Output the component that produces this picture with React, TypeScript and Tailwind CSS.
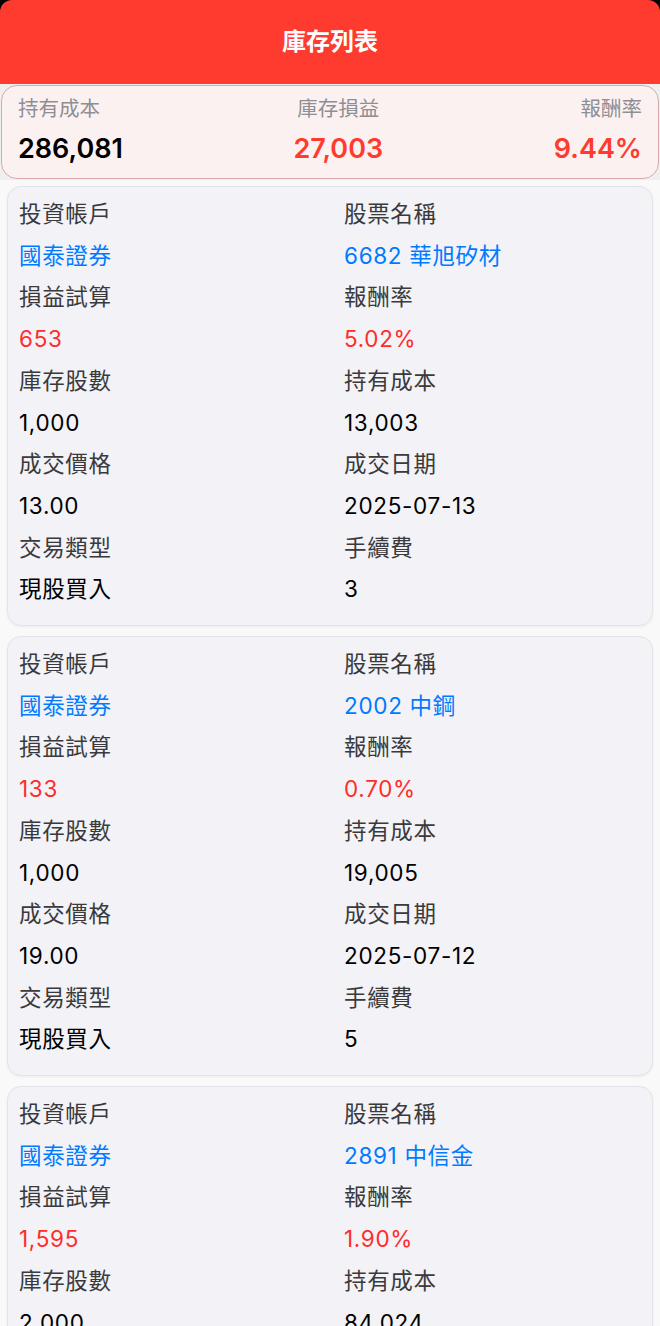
import React from 'react';

interface Holding {
    account: string;
    stock: string;
    pnl: string;
    rate: string;
    shares: string;
    cost: string;
    price: string;
    date: string;
    type: string;
    fee: string;
}

const holdings: Holding[] = [
    { account: '國泰證券', stock: '6682 華旭矽材', pnl: '653', rate: '5.02%', shares: '1,000', cost: '13,003', price: '13.00', date: '2025-07-13', type: '現股買入', fee: '3' },
    { account: '國泰證券', stock: '2002 中鋼', pnl: '133', rate: '0.70%', shares: '1,000', cost: '19,005', price: '19.00', date: '2025-07-12', type: '現股買入', fee: '5' },
    { account: '國泰證券', stock: '2891 中信金', pnl: '1,595', rate: '1.90%', shares: '2,000', cost: '84,024', price: '42.00', date: '2025-07-11', type: '現股買入', fee: '24' },
];

const font = { fontFamily: 'Inter, "Noto Sans CJK TC", sans-serif' };

const HoldingCard: React.FC<{ h: Holding }> = ({ h }) => {
    const rows: [string, string, string][] = [
        ['投資帳戶', '股票名稱', ''],
        [h.account, h.stock, 'blue'],
        ['損益試算', '報酬率', ''],
        [h.pnl, h.rate, 'red'],
        ['庫存股數', '持有成本', ''],
        [h.shares, h.cost, 'plain'],
        ['成交價格', '成交日期', ''],
        [h.price, h.date, 'plain'],
        ['交易類型', '手續費', ''],
        [h.type, h.fee, 'plain'],
    ];

    const colorFor = (kind: string) =>
        kind === 'blue' ? 'text-[#007aff]' : kind === 'red' ? 'text-[#ff2d2a]' : kind === 'plain' ? 'text-black' : 'text-[#3a3a3c]';

    return (
        <div className="mx-[7px] rounded-[14px] border border-[#e3e3e8] bg-[#f2f2f7] px-[11px] pt-[6px] pb-[15px] shadow-[0_1px_3px_rgba(0,0,0,0.05)]">
            <div className="grid grid-cols-2 gap-x-[28px] text-[22.5px] leading-[41.7px] tracking-[0.03em]">
                {rows.map(([left, right, kind], i) => (
                    <React.Fragment key={i}>
                        <span className={`whitespace-nowrap ${colorFor(kind)}`}>{left}</span>
                        <span className={`whitespace-nowrap ${colorFor(kind)}`}>{right}</span>
                    </React.Fragment>
                ))}
            </div>
        </div>
    );
};

const App: React.FC = () => {
    return (
        <div className="h-[1326px] w-[660px] overflow-hidden bg-black" style={font}>
            <div className="flex h-[84px] items-center justify-center rounded-t-[12px] bg-[#ff3b30]">
                <h1 className="text-[24px] font-bold text-white">庫存列表</h1>
            </div>

            <div className="h-full bg-[#f9f9f9]">
                <div className="bg-[#efefef] p-px">
                    <div className="flex h-[94px] items-stretch justify-between rounded-[16px] border border-[#dba9a9] bg-[#fcf1f1] px-[16px]">
                        <div className="flex flex-col pt-[9px]">
                            <span className="text-[20.5px] leading-[28px] text-[#8e8e93]">持有成本</span>
                            <span className="mt-[11px] text-[27px] leading-[30px] font-semibold text-black">286,081</span>
                        </div>
                        <div className="flex flex-col items-center pt-[9px]">
                            <span className="text-[20.5px] leading-[28px] text-[#8e8e93]">庫存損益</span>
                            <span className="mt-[11px] text-[27px] leading-[30px] font-semibold text-[#ff3b30]">27,003</span>
                        </div>
                        <div className="flex flex-col items-end pt-[9px]">
                            <span className="text-[20.5px] leading-[28px] text-[#8e8e93]">報酬率</span>
                            <span className="mt-[11px] text-[27px] leading-[30px] font-semibold text-[#ff3b30]">9.44%</span>
                        </div>
                    </div>
                </div>

                <div className="flex flex-col gap-[10px] pt-[6px]">
                    {holdings.map((h, i) => (
                        <HoldingCard key={i} h={h} />
                    ))}
                </div>
            </div>
        </div>
    );
};

export default App;
